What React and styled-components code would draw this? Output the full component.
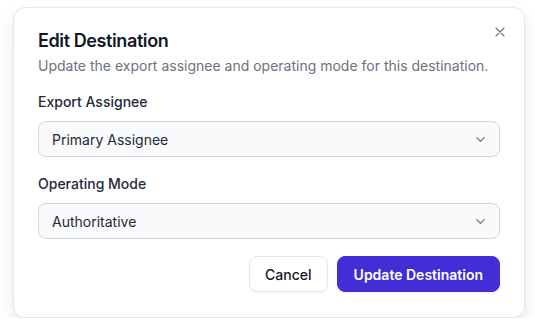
import React, { useState } from "react";
import styled, { createGlobalStyle } from "styled-components";

const GlobalStyle = createGlobalStyle`
  body {
    margin: 0;
    background: #ffffff;
    font-family: Inter, "Noto Sans", sans-serif;
  }
`;

const Page = styled.div`
  padding: 7px 10px 0 13px;
`;

const Dialog = styled.div`
  position: relative;
  width: 512px;
  box-sizing: border-box;
  padding: 21px 24px 25px 24px;
  background: #ffffff;
  border: 1px solid #e5e7eb;
  border-radius: 12px;
  box-shadow: 0 8px 20px rgba(17, 24, 39, 0.08), 0 2px 5px rgba(17, 24, 39, 0.04);
`;

const CloseButton = styled.button`
  position: absolute;
  top: 16px;
  right: 16px;
  width: 16px;
  height: 16px;
  padding: 0;
  border: 0;
  background: none;
  color: #6b7280;
  display: flex;
  align-items: center;
  justify-content: center;
  cursor: pointer;
`;

const Title = styled.h2`
  margin: 0;
  font-size: 18px;
  line-height: 24px;
  font-weight: 600;
  letter-spacing: -0.4px;
  color: #111827;
`;

const Description = styled.p`
  margin: 3px 0 0 0;
  font-size: 14px;
  line-height: 20px;
  color: #6b7280;
`;

const Form = styled.div`
  display: flex;
  flex-direction: column;
  gap: 17px;
  margin-top: 16px;
`;

const Field = styled.div`
  display: flex;
  flex-direction: column;
  gap: 9px;
`;

const Label = styled.label`
  font-size: 14px;
  line-height: 20px;
  font-weight: 500;
  color: #1f2937;
`;

const SelectBox = styled.div`
  height: 36px;
  box-sizing: border-box;
  display: flex;
  align-items: center;
  justify-content: space-between;
  padding: 0 11px 0 13px;
  background: #f9fafb;
  border: 1px solid #d1d5db;
  border-radius: 8px;
  font-size: 14px;
  color: #1f2937;
`;

const Footer = styled.div`
  display: flex;
  justify-content: flex-end;
  gap: 9px;
  margin-top: 17px;
`;

const Button = styled.button`
  height: 36px;
  padding: 0 ${(p) => (p.$primary ? "16px" : "15px")};
  border-radius: 8px;
  font-family: Inter, "Noto Sans", sans-serif;
  font-size: 14px;
  font-weight: ${(p) => (p.$primary ? 600 : 500)};
  border: 1px solid ${(p) => (p.$primary ? "#432dd7" : "#e5e7eb")};
  background: ${(p) => (p.$primary ? "#432dd7" : "#ffffff")};
  color: ${(p) => (p.$primary ? "#ffffff" : "#111827")};
  box-shadow: 0 1px 2px rgba(0, 0, 0, 0.05);
  cursor: pointer;
`;

const Chevron = () => (
  <svg width="15" height="15" viewBox="0 0 24 24" fill="none" stroke="#6b7280" strokeWidth="2" strokeLinecap="round" strokeLinejoin="round">
    <path d="m6 9 6 6 6-6" />
  </svg>
);

const Select = ({ value }) => (
  <SelectBox>
    <span>{value}</span>
    <Chevron />
  </SelectBox>
);

export default function App() {
  const [assignee] = useState("Primary Assignee");
  const [mode] = useState("Authoritative");

  return (
    <Page>
      <GlobalStyle />
      <Dialog>
        <CloseButton aria-label="Close">
          <svg width="16" height="16" viewBox="0 0 24 24" fill="none" stroke="currentColor" strokeWidth="1.6" strokeLinecap="round">
            <path d="M18 6 6 18M6 6l12 12" />
          </svg>
        </CloseButton>
        <Title>Edit Destination</Title>
        <Description>Update the export assignee and operating mode for this destination.</Description>
        <Form>
          <Field>
            <Label>Export Assignee</Label>
            <Select value={assignee} />
          </Field>
          <Field>
            <Label>Operating Mode</Label>
            <Select value={mode} />
          </Field>
        </Form>
        <Footer>
          <Button>Cancel</Button>
          <Button $primary>Update Destination</Button>
        </Footer>
      </Dialog>
    </Page>
  );
}
